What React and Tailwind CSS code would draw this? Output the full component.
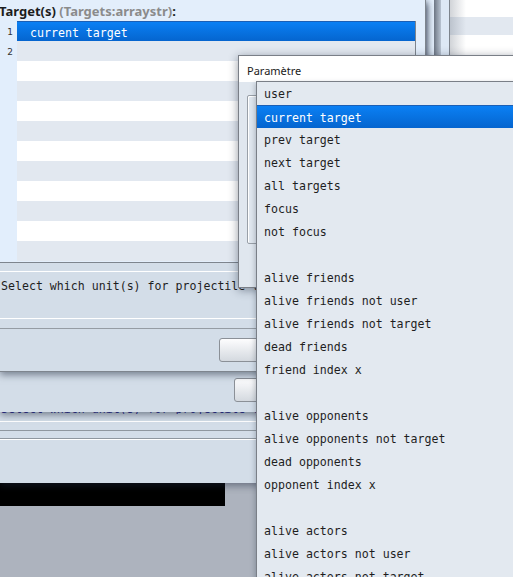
import React from "react";

const mono = "font-['DejaVu_Sans_Mono','Liberation_Mono',monospace] text-[11.6px]";
const sans = "font-['Noto_Sans','Open_Sans',sans-serif]";

const choices = [
  "user",
  "current target",
  "prev target",
  "next target",
  "all targets",
  "focus",
  "not focus",
  "",
  "alive friends",
  "alive friends not user",
  "alive friends not target",
  "dead friends",
  "friend index x",
  "",
  "alive opponents",
  "alive opponents not target",
  "dead opponents",
  "opponent index x",
  "",
  "alive actors",
  "alive actors not user",
  "alive actors not target",
];

const editorLines = ["current target", "", "", "", "", "", "", "", "", "", "", ""];

function Button({ className = "" }) {
  return (
    <div
      className={`h-[24px] w-[90px] rounded-[3px] border border-[#8b9097] bg-gradient-to-b from-[#fdfdfe] to-[#d4d9df] ${className}`}
    />
  );
}

export default function App() {
  return (
    <div className="relative h-[577px] w-[513px] overflow-hidden bg-[#adb3be]">
      {/* window far right, behind the editor */}
      <div className="absolute left-[449px] top-0 flex h-[80px] w-[80px] border-l border-[#7d848d] bg-white">
        <div className="flex flex-1 flex-col">
          <div className="h-[17px]" />
          <div className="h-[18px] bg-[#e2e8f0]" />
        </div>
        <div className="absolute inset-y-0 left-0 w-[16px] bg-gradient-to-r from-[rgba(90,100,115,0.28)] to-transparent" />
      </div>

      {/* narrow strip window between the two */}
      <div className="absolute left-[425px] top-0 flex h-[80px] w-[24px] border-l border-[#7d848d] bg-[#e3eefb]">
        <div className="w-[8px]" />
        <div className="w-[7px] bg-gradient-to-r from-[#6f7886] to-[#b8c3d1]" />
        <div className="flex-1 bg-[#dde8f5]" />
      </div>

      {/* black strip on the desktop */}
      <div className="absolute left-0 top-[483px] h-[23px] w-[225px] bg-black" />

      {/* lowest dialog: only the strip below the middle dialog shows */}
      <div className="absolute left-0 top-0 flex h-[483px] w-[426px] flex-col bg-[#d3dde8] shadow-[0_3px_7px_rgba(30,40,60,0.45)]">
        <div className="flex-1" />
        <div className="h-[3px] overflow-hidden">
          <div className={`-mt-[9px] whitespace-nowrap pl-[1px] leading-[14px] text-[#2b2b96] ${mono}`}>
            Select which unit(s) for projectile targeting
          </div>
        </div>
        <div className="h-[7px]" />
        <div className="h-px bg-white" />
        <div className="h-[8px]" />
        <div className="h-px bg-[#8f979f]" />
        <div className="h-[7px]" />
        <div className="h-px bg-[#8f979f]" />
        <div className="h-px bg-white" />
        <div className="h-[43px]" />
      </div>

      {/* middle dialog */}
      <div className="absolute left-0 top-0 flex h-[412px] w-[426px] flex-col justify-end bg-[#d3dde8] shadow-[0_3px_7px_rgba(30,40,60,0.5)]">
        <div className="flex pb-[10px] pl-[234px]">
          <Button />
        </div>
      </div>

      {/* target list editor */}
      <div className="absolute left-0 top-0 flex h-[372px] w-[426px] flex-col border-b border-r border-[#7e858e] bg-[#d3dde8] shadow-[0_3px_7px_rgba(30,40,60,0.5)]">
        <div className="flex h-[262px] flex-col bg-[#e3eefb]">
          <div className={`h-[21px] overflow-hidden whitespace-nowrap text-[13px] font-bold leading-[23px] ${sans}`}>
            <span className="ml-[-1px] text-[#1d1d1d]">Target(s)</span>{" "}
            <span className="text-[#8b8b8b]">(Targets:arraystr)</span>
            <span className="text-[#1d1d1d]">:</span>
          </div>
          <div className="flex w-[416px] flex-col border-r border-[#7e858e]">
            {editorLines.map((text, i) => {
              const selected = i === 0;
              const stripe = i % 2 === 1 ? "bg-[#e2e8f0]" : "bg-white";
              return (
                <div key={i} className="flex h-[20px]">
                  <div className="w-[17px] bg-[#e2eefc] pr-[4px] text-right font-['DejaVu_Sans',sans-serif] text-[9px] leading-[23px] text-[#333]">
                    {i < 2 ? i + 1 : ""}
                  </div>
                  <div
                    className={`flex-1 overflow-hidden whitespace-nowrap pl-[13px] leading-[23px] ${mono} ${
                      selected
                        ? "border-t border-[#1b5fb5] bg-gradient-to-b from-[#0b80f4] to-[#0565cf] text-white"
                        : `${stripe} text-[#1e1e1e]`
                    }`}
                  >
                    {text}
                  </div>
                </div>
              );
            })}
          </div>
        </div>
        <div className="h-px bg-[#7e858e]" />
        <div className="h-[8px]" />
        <div className="h-px bg-white" />
        <div className={`h-[46px] overflow-hidden whitespace-nowrap pl-[1px] pt-[3px] leading-[23px] text-[#1e1e1e] ${mono}`}>
          Select which unit(s) for projectile targeting
        </div>
        <div className="h-px bg-white" />
        <div className="h-[9px]" />
        <div className="h-px bg-[#959ca4]" />
        <div className="flex pl-[219px] pt-[9px]">
          <Button />
        </div>
      </div>

      {/* Paramètre dialog */}
      <div className="absolute left-[238px] top-[55px] flex h-[233px] w-[300px] flex-col border border-[#7a7f87] bg-[#e0e7ef] shadow-[0_2px_9px_rgba(20,30,50,0.45)]">
        <div className={`h-[26px] bg-white pl-[8px] pt-[7px] text-[11px] leading-[15px] text-[#1a1a1a] ${sans}`}>
          Paramètre
        </div>
        <div className="pl-[8px] pt-[13px]">
          <div className="h-[149px] w-[260px] rounded-[2px] border border-[#99a0a8] shadow-[inset_1px_1px_0_white]" />
        </div>
      </div>

      {/* drop-down choice list */}
      <div className="absolute left-[256px] top-[81px] flex h-[520px] w-[280px] flex-col border-l border-t border-[#7a7f87] bg-[#e3e9f0] shadow-[-1px_2px_5px_rgba(20,30,50,0.25)]">
        {choices.map((c, i) => (
          <div
            key={i}
            className={`h-[23px] shrink-0 overflow-hidden whitespace-nowrap pl-[7px] leading-[25px] ${mono} ${
              i === 1
                ? "border-t border-[#1b5fb5] bg-gradient-to-b from-[#0b80f4] to-[#0565cf] leading-[23px] text-white"
                : "text-[#1e1e1e]"
            }`}
          >
            {c}
          </div>
        ))}
      </div>
    </div>
  );
}
